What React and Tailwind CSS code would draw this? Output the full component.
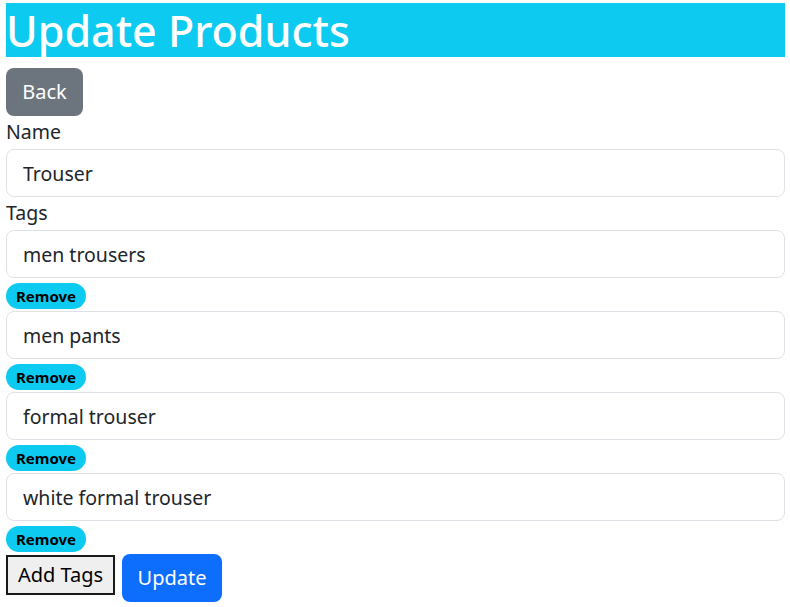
import { useState } from "react";

const Field = ({ value }) => (
  <input
    readOnly
    value={value}
    className="block w-full h-[48px] rounded-[8px] border border-[#dee2e6] bg-white px-[16px] text-[19.5px] text-[#212529] outline-none"
  />
);

const RemoveBadge = () => (
  <button className="mt-[5px] mb-[2px] flex h-[26px] w-[80px] items-center justify-center rounded-full bg-[#0dcaf0] text-[15px] font-bold text-black">
    Remove
  </button>
);

export default function App() {
  const [tags] = useState([
    "men trousers",
    "men pants",
    "formal trouser",
    "white formal trouser",
  ]);

  return (
    <div className="min-h-screen bg-white pl-[6px] pr-[5px] pt-[3px] font-['Noto_Sans',sans-serif] text-[#212529]">
      <h1 className="h-[54px] bg-[#0dcaf0] text-[43px] font-medium leading-[56px] text-white">
        Update Products
      </h1>

      <button className="mt-[11px] h-[48px] w-[77px] rounded-[8px] bg-[#6c757d] text-[20px] text-white">
        Back
      </button>

      <label className="block mt-[1px] h-[32px] text-[19.5px] leading-[30px]">Name</label>
      <Field value="Trouser" />

      <label className="block h-[33px] text-[19.5px] leading-[32px]">Tags</label>
      {tags.map((tag) => (
        <div key={tag}>
          <Field value={tag} />
          <RemoveBadge />
        </div>
      ))}

      <div className="flex items-start gap-[7px]">
        <button className="mt-[1px] h-[40px] w-[109px] border-2 border-[#1a1a1a] bg-[#efefef] text-[20px] text-black">
          Add Tags
        </button>
        <button className="h-[48px] w-[100px] rounded-[8px] bg-[#0d6efd] text-[20px] text-white">
          Update
        </button>
      </div>
    </div>
  );
}
